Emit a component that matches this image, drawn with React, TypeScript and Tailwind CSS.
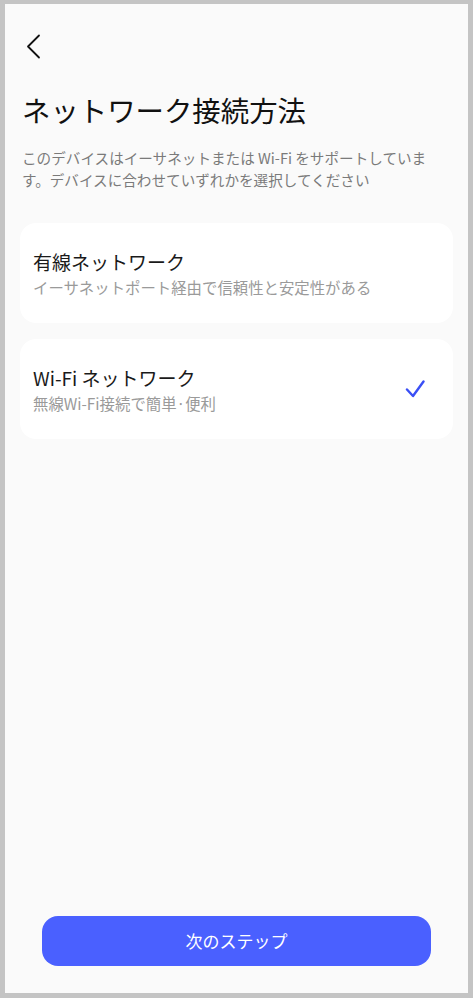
const font = { fontFamily: '"Noto Sans CJK JP", "Noto Sans", sans-serif' };

function Option({ title, desc, selected }: { title: string; desc: string; selected?: boolean }) {
  return (
    <div className="flex h-[100px] items-center justify-between rounded-2xl bg-white pl-[13px] pr-[28px]">
      <div className="flex flex-col">
        <div className="text-[19px] leading-[27px] text-[#1a1a1a]">{title}</div>
        <div className="mt-[2px] text-[15.4px] leading-[21px] text-[#9a9a9a]">{desc}</div>
      </div>
      {selected && (
        <svg width="20" height="20" viewBox="0 0 20 20" fill="none">
          <path d="M2 10.5 L8 17 L18.5 2.5" stroke="#3a4ff5" strokeWidth="2.4" strokeLinecap="round" strokeLinejoin="round" />
        </svg>
      )}
    </div>
  );
}

export default function App() {
  return (
    <div className="h-[998px] w-[473px] bg-[#c4c4c4] pb-[5px] pl-[5px] pr-[5px] pt-[4px]" style={font}>
      <div className="flex h-full flex-col bg-[#fafafa]">
        {/* header */}
        <div className="pl-[21px] pt-[30px]">
          <svg width="16" height="26" viewBox="0 0 16 26" fill="none">
            <path d="M13 1.5 L2 12.5 L13 23.5" stroke="#111" strokeWidth="1.8" strokeLinecap="round" strokeLinejoin="round" />
          </svg>
        </div>
        <h1 className="mt-[31px] pl-[17px] text-[28.4px] font-normal leading-[38px] text-[#111]">ネットワーク接続方法</h1>
        <p className="mt-[18px] pl-[17px] pr-[4px] text-[14.6px] leading-[22px] text-[#7a7a7a]">
          このデバイスはイーサネットまたは Wi-Fi をサポートしていま
          <br />
          す。デバイスに合わせていずれかを選択してください
        </p>

        <div className="mt-[32px] flex flex-col gap-[16px] px-[15px]">
          <Option title="有線ネットワーク" desc="イーサネットポート経由で信頼性と安定性がある" />
          <Option title="Wi-Fi ネットワーク" desc="無線Wi-Fi接続で簡単·便利" selected />
        </div>

        <div className="mt-auto px-[37px] pb-[27px]">
          <button className="h-[50px] w-full rounded-2xl bg-[#4a60ff] text-[17px] text-white">次のステップ</button>
        </div>
      </div>
    </div>
  );
}
